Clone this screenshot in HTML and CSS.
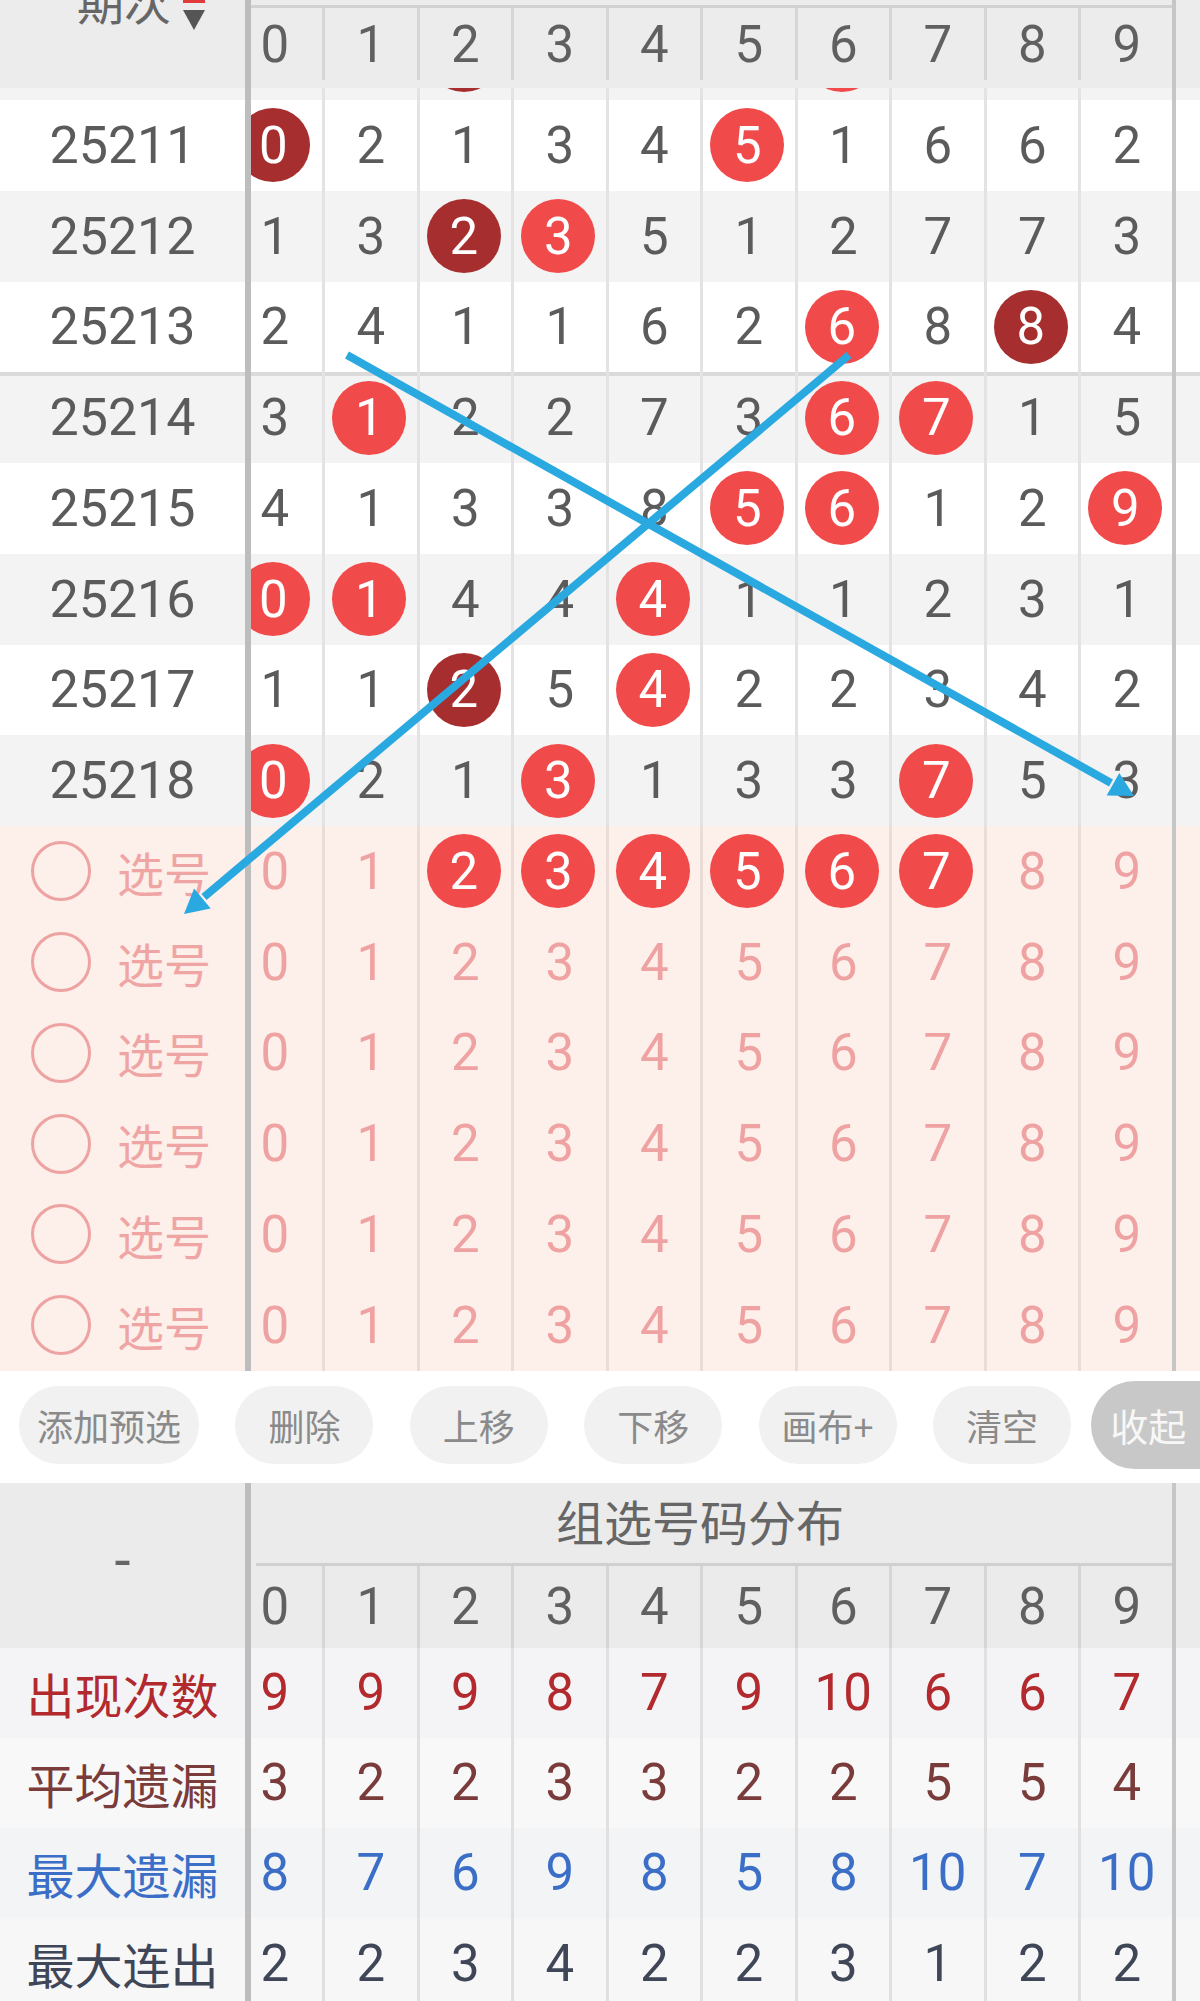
FILE: index.html
```html
<!DOCTYPE html>
<html lang="zh">
<head>
<meta charset="utf-8">
<title>组选走势</title>
<link rel="stylesheet" href="styles.css">
</head>
<body>
<div class="page">
  <div class="head">
    <div class="lead hl">
      <span class="qc">期次</span>
      <svg class="sort" width="22" height="32" viewBox="0 0 22 32"><rect x="0" y="0" width="22" height="3" fill="#e03a3a"/><polygon points="0,10 22,10 11,30" fill="#555"/></svg>
    </div>
    <div class="div"></div>
    <div class="nums hn">
      <div class="c">0</div><div class="c">1</div><div class="c">2</div><div class="c">3</div><div class="c">4</div><div class="c">5</div><div class="c">6</div><div class="c">7</div><div class="c">8</div><div class="c">9</div>
    </div>
    <div class="rdiv"></div><div class="tail"></div>
  </div>

  <div class="clip">
    <div class="scroll">
      <div class="row g">
        <div class="lead"></div><div class="div"></div>
        <div class="nums"><div class="c"></div><div class="c"></div><div class="c"><i class="b d"></i></div><div class="c"></div><div class="c"></div><div class="c"></div><div class="c"><i class="b"></i></div><div class="c"></div><div class="c"></div><div class="c"></div></div>
        <div class="rdiv"></div><div class="tail"></div>
      </div>
      <div class="row w">
        <div class="lead">25211</div><div class="div"></div>
        <div class="nums"><div class="c"><i class="b d">0</i></div><div class="c">2</div><div class="c">1</div><div class="c">3</div><div class="c">4</div><div class="c"><i class="b">5</i></div><div class="c">1</div><div class="c">6</div><div class="c">6</div><div class="c">2</div></div>
        <div class="rdiv"></div><div class="tail"></div>
      </div>
      <div class="row g">
        <div class="lead">25212</div><div class="div"></div>
        <div class="nums"><div class="c">1</div><div class="c">3</div><div class="c"><i class="b d">2</i></div><div class="c"><i class="b">3</i></div><div class="c">5</div><div class="c">1</div><div class="c">2</div><div class="c">7</div><div class="c">7</div><div class="c">3</div></div>
        <div class="rdiv"></div><div class="tail"></div>
      </div>
      <div class="row w">
        <div class="lead">25213</div><div class="div"></div>
        <div class="nums"><div class="c">2</div><div class="c">4</div><div class="c">1</div><div class="c">1</div><div class="c">6</div><div class="c">2</div><div class="c"><i class="b">6</i></div><div class="c">8</div><div class="c"><i class="b d">8</i></div><div class="c">4</div></div>
        <div class="rdiv"></div><div class="tail"></div>
      </div>
      <div class="row g sep">
        <div class="lead">25214</div><div class="div"></div>
        <div class="nums"><div class="c">3</div><div class="c"><i class="b">1</i></div><div class="c">2</div><div class="c">2</div><div class="c">7</div><div class="c">3</div><div class="c"><i class="b">6</i></div><div class="c"><i class="b">7</i></div><div class="c">1</div><div class="c">5</div></div>
        <div class="rdiv"></div><div class="tail"></div>
      </div>
      <div class="row w">
        <div class="lead">25215</div><div class="div"></div>
        <div class="nums"><div class="c">4</div><div class="c">1</div><div class="c">3</div><div class="c">3</div><div class="c">8</div><div class="c"><i class="b">5</i></div><div class="c"><i class="b">6</i></div><div class="c">1</div><div class="c">2</div><div class="c"><i class="b">9</i></div></div>
        <div class="rdiv"></div><div class="tail"></div>
      </div>
      <div class="row g">
        <div class="lead">25216</div><div class="div"></div>
        <div class="nums"><div class="c"><i class="b">0</i></div><div class="c"><i class="b">1</i></div><div class="c">4</div><div class="c">4</div><div class="c"><i class="b">4</i></div><div class="c">1</div><div class="c">1</div><div class="c">2</div><div class="c">3</div><div class="c">1</div></div>
        <div class="rdiv"></div><div class="tail"></div>
      </div>
      <div class="row w">
        <div class="lead">25217</div><div class="div"></div>
        <div class="nums"><div class="c">1</div><div class="c">1</div><div class="c"><i class="b d">2</i></div><div class="c">5</div><div class="c"><i class="b">4</i></div><div class="c">2</div><div class="c">2</div><div class="c">3</div><div class="c">4</div><div class="c">2</div></div>
        <div class="rdiv"></div><div class="tail"></div>
      </div>
      <div class="row g">
        <div class="lead">25218</div><div class="div"></div>
        <div class="nums"><div class="c"><i class="b">0</i></div><div class="c">2</div><div class="c">1</div><div class="c"><i class="b">3</i></div><div class="c">1</div><div class="c">3</div><div class="c">3</div><div class="c"><i class="b">7</i></div><div class="c">5</div><div class="c">3</div></div>
        <div class="rdiv"></div><div class="tail"></div>
      </div>
    </div>
  </div>

  <div class="selbox">
    <div class="row sel">
      <div class="lead sl"><span class="ring"></span><span class="xh">选号</span></div><div class="div"></div>
      <div class="nums"><div class="c">0</div><div class="c">1</div><div class="c"><i class="b">2</i></div><div class="c"><i class="b">3</i></div><div class="c"><i class="b">4</i></div><div class="c"><i class="b">5</i></div><div class="c"><i class="b">6</i></div><div class="c"><i class="b">7</i></div><div class="c">8</div><div class="c">9</div></div>
      <div class="rdiv"></div><div class="tail"></div>
    </div>
    <div class="row sel">
      <div class="lead sl"><span class="ring"></span><span class="xh">选号</span></div><div class="div"></div>
      <div class="nums"><div class="c">0</div><div class="c">1</div><div class="c">2</div><div class="c">3</div><div class="c">4</div><div class="c">5</div><div class="c">6</div><div class="c">7</div><div class="c">8</div><div class="c">9</div></div>
      <div class="rdiv"></div><div class="tail"></div>
    </div>
    <div class="row sel">
      <div class="lead sl"><span class="ring"></span><span class="xh">选号</span></div><div class="div"></div>
      <div class="nums"><div class="c">0</div><div class="c">1</div><div class="c">2</div><div class="c">3</div><div class="c">4</div><div class="c">5</div><div class="c">6</div><div class="c">7</div><div class="c">8</div><div class="c">9</div></div>
      <div class="rdiv"></div><div class="tail"></div>
    </div>
    <div class="row sel">
      <div class="lead sl"><span class="ring"></span><span class="xh">选号</span></div><div class="div"></div>
      <div class="nums"><div class="c">0</div><div class="c">1</div><div class="c">2</div><div class="c">3</div><div class="c">4</div><div class="c">5</div><div class="c">6</div><div class="c">7</div><div class="c">8</div><div class="c">9</div></div>
      <div class="rdiv"></div><div class="tail"></div>
    </div>
    <div class="row sel">
      <div class="lead sl"><span class="ring"></span><span class="xh">选号</span></div><div class="div"></div>
      <div class="nums"><div class="c">0</div><div class="c">1</div><div class="c">2</div><div class="c">3</div><div class="c">4</div><div class="c">5</div><div class="c">6</div><div class="c">7</div><div class="c">8</div><div class="c">9</div></div>
      <div class="rdiv"></div><div class="tail"></div>
    </div>
    <div class="row sel">
      <div class="lead sl"><span class="ring"></span><span class="xh">选号</span></div><div class="div"></div>
      <div class="nums"><div class="c">0</div><div class="c">1</div><div class="c">2</div><div class="c">3</div><div class="c">4</div><div class="c">5</div><div class="c">6</div><div class="c">7</div><div class="c">8</div><div class="c">9</div></div>
      <div class="rdiv"></div><div class="tail"></div>
    </div>
  </div>

  <div class="bar">
    <span class="btn wide">添加预选</span>
    <span class="btn">删除</span>
    <span class="btn">上移</span>
    <span class="btn">下移</span>
    <span class="btn">画布+</span>
    <span class="btn">清空</span>
    <span class="btn fold">收起</span>
  </div>

  <div class="bhead">
    <div class="lead bl">-</div><div class="div"></div>
    <div class="bright">
      <div class="binner">
        <div class="btitle">组选号码分布</div>
        <div class="bdigits">
          <div class="c">0</div><div class="c">1</div><div class="c">2</div><div class="c">3</div><div class="c">4</div><div class="c">5</div><div class="c">6</div><div class="c">7</div><div class="c">8</div><div class="c">9</div>
        </div>
      </div>
    </div>
    <div class="rdiv"></div><div class="tail"></div>
  </div>

  <div class="row st s1">
    <div class="lead lab">出现次数</div><div class="div"></div>
    <div class="nums"><div class="c">9</div><div class="c">9</div><div class="c">9</div><div class="c">8</div><div class="c">7</div><div class="c">9</div><div class="c">10</div><div class="c">6</div><div class="c">6</div><div class="c">7</div></div>
    <div class="rdiv"></div><div class="tail"></div>
  </div>
  <div class="row st s2">
    <div class="lead lab">平均遗漏</div><div class="div"></div>
    <div class="nums"><div class="c">3</div><div class="c">2</div><div class="c">2</div><div class="c">3</div><div class="c">3</div><div class="c">2</div><div class="c">2</div><div class="c">5</div><div class="c">5</div><div class="c">4</div></div>
    <div class="rdiv"></div><div class="tail"></div>
  </div>
  <div class="row st s3">
    <div class="lead lab">最大遗漏</div><div class="div"></div>
    <div class="nums"><div class="c">8</div><div class="c">7</div><div class="c">6</div><div class="c">9</div><div class="c">8</div><div class="c">5</div><div class="c">8</div><div class="c">10</div><div class="c">7</div><div class="c">10</div></div>
    <div class="rdiv"></div><div class="tail"></div>
  </div>
  <div class="row st s4">
    <div class="lead lab">最大连出</div><div class="div"></div>
    <div class="nums"><div class="c">2</div><div class="c">2</div><div class="c">3</div><div class="c">4</div><div class="c">2</div><div class="c">2</div><div class="c">3</div><div class="c">1</div><div class="c">2</div><div class="c">2</div></div>
    <div class="rdiv"></div><div class="tail"></div>
  </div>

  <svg class="arrows" width="1200" height="2001" viewBox="0 0 1200 2001">
    <line x1="347" y1="355" x2="1111" y2="783" stroke="#2aa9e1" stroke-width="8"/>
    <polygon points="1134,796 1106.7,795.6 1119.3,773" fill="#2aa9e1"/>
    <line x1="849" y1="355" x2="204" y2="897" stroke="#2aa9e1" stroke-width="8"/>
    <polygon points="184,914 194.1,888.6 210.7,908.6" fill="#2aa9e1"/>
  </svg>
</div>
</body>
</html>
```

FILE: styles.css
```css
* { box-sizing: border-box; margin: 0; padding: 0; }
html, body { margin: 0; background: #fff; }
body { width: 1200px; height: 2001px; overflow: hidden; font-family: Roboto, "Noto Sans CJK SC", sans-serif; }
.page { position: relative; width: 1200px; }

.row { display: flex; height: 90.75px; }
.lead { width: 245px; flex: none; display: flex; align-items: center; justify-content: center; font-size: 52px; color: #5b5b5b; }
.div { width: 6px; flex: none; background: #bdbdbd; }
.rdiv { width: 4px; flex: none; background: #c6c6c6; }
.tail { flex: 1; }
.nums { width: 921px; flex: none; display: flex; overflow: hidden; }
.c { width: 94.5px; flex: none; display: flex; align-items: center; justify-content: center; border-left: 3px solid #e3e3e3; font-size: 51px; color: #5b5b5b; }
.c:first-child { margin-left: -23.5px; border-left: none; }

.b { font-style: normal; width: 74px; height: 74px; border-radius: 50%; background: #f14a4a; color: #fff; display: flex; align-items: center; justify-content: center; margin-left: -3px; }
.b.d { background: #a62e2e; }

/* header */
.head { display: flex; height: 88px; background: #ececec; }
.hl { justify-content: flex-start; align-items: flex-start; padding-left: 77px; }
.qc { font-family: "Noto Sans CJK SC", sans-serif; font-size: 47px; line-height: 47px; color: #666; margin-top: -24px; }
.sort { margin-left: 12px; }
.hn { margin-top: 5px; border-top: 3px solid #d2d2d2; padding-bottom: 8px; }
.hn .c { border-left-color: #d6d6d6; color: #606060; }

/* body rows */
.clip { height: 738px; overflow: hidden; }
.scroll { margin-top: -78.75px; }
.w { background: #fff; }
.g { background: #f3f3f3; }
.sep { box-shadow: inset 0 4px 0 #dadada; }

/* selection rows */
.sel { background: #fdefea; }
.sel .c { color: #efa2a2; border-left-color: #ecdcd7; }
.sel .b { color: #fff; }
.sl { justify-content: flex-start; padding-left: 31px; }
.ring { width: 60px; height: 60px; border: 3px solid #eea3a3; border-radius: 50%; flex: none; }
.xh { font-family: "Noto Sans CJK SC", sans-serif; font-size: 47px; color: #f0a5a5; margin-left: 26px; }

/* buttons */
.bar { height: 112px; background: #fff; display: flex; align-items: center; padding-left: 19px; padding-bottom: 4px; gap: 36.4px; overflow: hidden; }
.btn { flex: none; height: 78px; width: 138px; border-radius: 39px; background: #f1f1f1; color: #8a8a8a; font-family: "Noto Sans CJK SC", sans-serif; font-size: 36px; display: flex; align-items: center; justify-content: center; }
.btn.wide { width: 180px; }
.btn.fold { width: 118px; height: 88px; margin-left: -16px; border-radius: 44px 0 0 44px; background: #c8c8c8; color: #f7f7f7; font-size: 38px; justify-content: flex-start; padding-left: 19px; }

/* bottom table */
.bhead { display: flex; height: 165px; background: #ebebeb; }
.bl { font-size: 58px; color: #666; padding-bottom: 10px; }
.bright { width: 921px; flex: none; overflow: hidden; }
.binner { width: 945px; margin-left: -23.5px; }
.btitle { height: 83px; display: flex; align-items: center; justify-content: center; font-family: "Noto Sans CJK SC", sans-serif; font-size: 48px; color: #666; border-bottom: 3px solid #d0d0d0; margin-left: 28px; padding-right: 28px; padding-bottom: 6px; }
.bdigits { display: flex; height: 82px; }
.bdigits .c { border-left-color: #d6d6d6; color: #606060; }
.bdigits .c:first-child { margin-left: 0; }

.st { height: 90.2px; }
.st .c { border-left-color: #e0e0e0; }
.lab { font-family: "Noto Sans CJK SC", sans-serif; font-size: 48px; }
.s1 { background: #f4f4f6; }
.s2 { background: #f8f8f8; }
.s3 { background: #f3f4f6; }
.s4 { background: #f7f7f7; }
.s1 .lab, .s1 .c { color: #b2292e; }
.s2 .lab, .s2 .c { color: #7a3b3b; }
.s3 .lab, .s3 .c { color: #3b6ec6; }
.s4 .lab, .s4 .c { color: #3f4657; }

.arrows { position: absolute; left: 0; top: 0; pointer-events: none; }
```
